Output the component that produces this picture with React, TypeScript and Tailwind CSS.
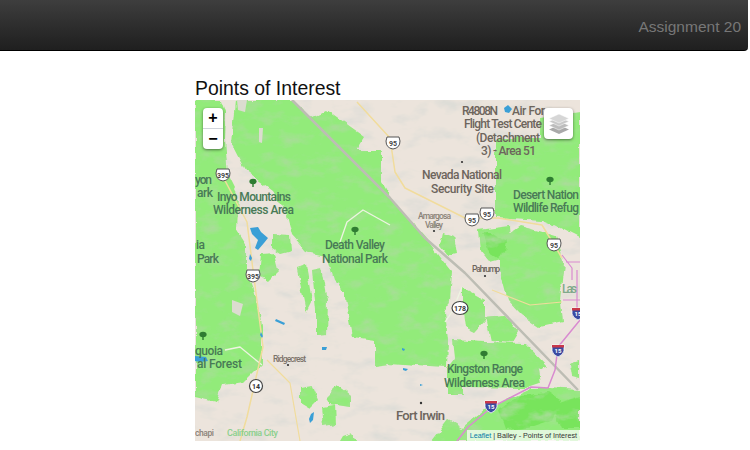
import React from "react";

const greens = [
  // left massif
  "195,100 222,100 226,112 225,140 228,175 238,195 236,228 247,245 247,272 254,290 259,310 262,327 262,363 243,382 223,385 217,402 195,397",
  // central block
  "232,145 236,100 294,100 310,118 327,110 365,137 357,150 382,150 382,182 392,200 420,232 432,246 444,262 452,272 450,300 445,313 448,340 447,367 430,366 390,363 375,365 375,340 353,337 345,292 333,280 326,256 307,252 292,235 287,215 272,190 245,170",
  "272,235 290,236 291,250 280,253 272,248",
  "260,254 276,253 280,270 268,282 258,276",
  "312,270 322,268 328,300 327,335 316,336 316,310",
  "297,268 306,265 312,300 306,312",
  "443,232 454,236 457,254 448,256 440,246",
  // north-east
  "495,138 540,138 540,118 580,112 580,238 552,224 542,220 495,217",
  "500,240 520,226 556,236 564,262 560,300 562,322 540,327 522,315 508,300 500,270",
  "478,230 510,226 512,256 490,262 480,250",
  "485,318 505,316 518,332 512,342 490,340",
  "570,363 580,360 580,378 572,376",
  "462,287 485,300 485,322 475,333 465,328 462,305",
  // Kingston
  "453,340 485,342 525,343 548,367 538,370 540,383 525,388 462,387 462,395 447,395 447,368 455,358",
  // south
  "432,441 448,420 462,428 485,409 531,388 548,388 580,390 580,441",
  "300,388 312,386 318,400 310,408 300,402",
  "244,322 250,312 262,322 252,335 244,340",
  "326,398 338,386 350,395 350,408 330,405",
  "322,408 335,406 336,424 324,426",
  "242,344 256,340 260,352 248,370 242,372",
  "343,436 352,433 358,441 340,441",
];

const brights = [
  "482,232 490,232 500,238 508,242 506,252 498,257 490,252",
  "498,410 520,395 548,392 560,400 552,420 528,428 505,430",
  "552,405 580,396 580,428 562,428",
];

const tan = [
  "237,100 247,100 245,112 238,110",
  "259,128 263,128 262,143 259,142",
  "232,300 243,304 240,316 232,312",
];

const lakes = [
  "M250 228 L258 227 L261 232 L268 238 L264 243 L258 250 L255 248 L258 240 L252 234 Z",
  "M250 254 L252 258 L251 261 L249 259 Z",
  "M504 108 L508 105 L512 109 L509 113 L505 112 Z",
  "M276 319 L285 323 L284 325 L275 321 Z",
  "M261 332 L263 336 L262 338 L260 335 Z",
  "M322 347 L327 347 L326 350 L322 350 Z",
  "M311 414 L314 412 L313 420 L310 423 L309 419 Z",
  "M195 356 L206 357 L208 361 L200 362 L195 361 Z",
  "M402 348 L405 349 L404 351 L402 350 Z",
  "M403 368 L408 369 L406 371 L403 370 Z",
  "M420 384 L423 385 L420 386 Z",
];

const labels: [string, number, number, number, string?, number?][] = [
  ["Inyo Mountains", 217, 201, 74],
  ["Wilderness Area", 213, 214, 81],
  ["yon", 195, 184, 17],
  ["ark", 197, 197, 16],
  ["ia", 196, 249, 9],
  ["Park", 197, 263, 22],
  ["Death Valley", 325, 249, 60],
  ["National Park", 322, 263, 66],
  ["R4808N", 462, 115, 36, "#6d655c"],
  ["Air For", 512, 115, 33, "#6d655c"],
  ["Flight Test Cente", 464, 128, 78, "#6d655c"],
  ["(Detachment", 476, 142, 64, "#6d655c"],
  ["3) - Area 51", 481, 155, 55, "#6d655c"],
  ["Nevada National", 422, 179, 80, "#6d655c"],
  ["Security Site", 431, 193, 63, "#6d655c"],
  ["Desert Nation", 513, 199, 66],
  ["Wildlife Refug", 513, 212, 66],
  ["Amargosa", 418, 219, 33, "#8a8278", 8.5],
  ["Valley", 425, 228, 18, "#8a8278", 8.5],
  ["Pahrump", 472, 272, 28, "#6d655c", 8.5],
  ["Las", 562, 293, 15, "#7fa98a"],
  ["Kingston Range", 447, 373, 76],
  ["Wilderness Area", 444, 387, 81],
  ["Fort Irwin", 396, 420, 49, "#6d655c", 13],
  ["quoia", 195, 355, 28],
  ["al Forest", 197, 368, 45],
  ["Ridgecrest", 273, 362, 33, "#7b736a", 8.5],
  ["chapi", 195, 436, 19, "#8a8278", 8.5],
  ["California City", 227, 436, 51, "#8ad08c", 9],
];

function Shield({ x, y, n }: { x: number; y: number; n: string }) {
  return (
    <g transform={`translate(${x} ${y})`}>
      <path d="M-6 -6 L6 -6 L7 -2 Q7 5 0 6 Q-7 5 -7 -2 Z" fill="#fff" stroke="#555" strokeWidth="1" />
      <text x="0" y="2.5" textAnchor="middle" fontSize="7" fontWeight="700" fill="#444">{n}</text>
    </g>
  );
}

function Oval({ x, y, n, wide }: { x: number; y: number; n: string; wide?: boolean }) {
  return (
    <g transform={`translate(${x} ${y})`}>
      <ellipse rx={wide ? 8 : 6.5} ry="6.5" fill="#fff" stroke="#444" strokeWidth="1.2" />
      <text x="0" y="2.5" textAnchor="middle" fontSize="7" fontWeight="700" fill="#333">{n}</text>
    </g>
  );
}

function Interstate({ x, y, n }: { x: number; y: number; n: string }) {
  return (
    <g transform={`translate(${x} ${y})`}>
      <path d="M-6 -5 L6 -5 L6 1 Q5 5 0 7 Q-5 5 -6 1 Z" fill="#3b4aa0" stroke="#fff" strokeWidth="0.8" />
      <path d="M-6 -5 L6 -5 L6 -2.5 L-6 -2.5 Z" fill="#c9384a" />
      <text x="0" y="3" textAnchor="middle" fontSize="6" fontWeight="700" fill="#fff">{n}</text>
    </g>
  );
}

function Tree({ x, y }: { x: number; y: number }) {
  return (
    <g transform={`translate(${x} ${y})`} fill="#2f7d32">
      <ellipse cx="0" cy="-1.5" rx="3.6" ry="2.8" />
      <rect x="-0.7" y="0" width="1.4" height="4" />
    </g>
  );
}

function TerrainMap() {
  return (
    <svg viewBox="195 100 385 341" className="block h-[341px] w-[385px] font-['Roboto',sans-serif]">
      <defs>
        <filter id="soft"><feGaussianBlur stdDeviation="0.4" /></filter>
        <filter id="desert" x="0" y="0" width="1" height="1">
          <feTurbulence type="fractalNoise" baseFrequency="0.035 0.07" numOctaves="4" seed="11" result="n" />
          <feColorMatrix in="n" type="matrix" values="0 0 0 0 0.72  0 0 0 0 0.72  0 0 0 0 0.68  2.6 0 0 0 -1.3" result="s" />
          <feMerge>
            <feMergeNode in="SourceGraphic" />
            <feMergeNode in="s" />
          </feMerge>
        </filter>
        <filter id="land" x="-0.05" y="-0.05" width="1.1" height="1.1">
          <feTurbulence type="fractalNoise" baseFrequency="0.07" numOctaves="3" seed="4" result="n" />
          <feDisplacementMap in="SourceGraphic" in2="n" scale="7" xChannelSelector="R" yChannelSelector="G" result="d" />
          <feGaussianBlur in="d" stdDeviation="0.5" result="b" />
          <feTurbulence type="fractalNoise" baseFrequency="0.05 0.09" numOctaves="4" seed="8" result="m" />
          <feColorMatrix in="m" type="matrix" values="0 0 0 0 0.4  0 0 0 0 0.72  0 0 0 0 0.32  2.2 0 0 0 -1.05" result="shade" />
          <feComposite in="shade" in2="b" operator="in" result="s" />
          <feMerge>
            <feMergeNode in="b" />
            <feMergeNode in="s" />
          </feMerge>
        </filter>
      </defs>
      <rect x="195" y="100" width="385" height="341" fill="#ece4dc" filter="url(#desert)" />
      <g filter="url(#land)">
        {greens.map((p) => <polygon key={p} points={p} fill="#92eb7a" />)}
        {brights.map((p) => <polygon key={p} points={p} fill="#78e45c" />)}
      </g>
      <g filter="url(#soft)">
        {tan.map((p) => <polygon key={p} points={p} fill="#dcdcd0" />)}
      </g>
      <g fill="none" strokeLinejoin="round" filter="url(#soft)">
        <path d="M292 100 L390 198 L425 238 L465 273 L578 390" stroke="#bdbdb4" strokeWidth="2.5" />
        <path d="M340 242 L347 222 L363 210 L390 225" stroke="#eef3e2" strokeWidth="1.3" />
        <path d="M462 287 L452 312 L445 322" stroke="#eef3e2" strokeWidth="1.3" />
        <path d="M225 350 L240 347 L262 365" stroke="#eef3e2" strokeWidth="1.3" />
        <path d="M357 102 L390 138 L395 172 L405 188 L465 218 L498 218 L542 225 L562 258" stroke="#f1dc9c" strokeWidth="1.5" />
        <path d="M222 175 L247 222 L253 270 L263 347 L247 417 L240 441" stroke="#f1dc9c" strokeWidth="1.5" />
        <path d="M267 360 L290 383 L300 441" stroke="#f1dc9c" strokeWidth="1.2" />
        <path d="M492 290 L530 305 L562 302" stroke="#f1dc9c" strokeWidth="1.2" />
        <path d="M580 320 L558 347 L555 370 L548 388 L531 387 L492 407 L468 427 L457 441" stroke="#d98bd0" strokeWidth="1.5" />
        <path d="M562 255 L572 268 L572 280 M580 262 L566 262 M563 300 L580 300 M577 270 L577 318" stroke="#d98bd0" strokeWidth="1.2" />
      </g>
      <g fill="#3a9fd6">
        {lakes.map((d) => <path key={d} d={d} />)}
      </g>
      <Tree x={253} y={183} />
      <Tree x={355} y={231} />
      <Tree x={550} y={181} />
      <Tree x={484} y={355} />
      <Tree x={203} y={336} />
      <g fill="#333">
        <circle cx="462" cy="162" r="1.1" />
        <circle cx="434" cy="231" r="1.1" />
        <circle cx="485" cy="276" r="1.1" />
        <circle cx="421" cy="403" r="1.2" />
        <circle cx="288" cy="365" r="1.1" />
      </g>
      <g fontWeight="500">
        {labels.map(([t, x, y, w, fill, size]) => (
          <text key={`${t}${y}`} x={x} y={y} textLength={w} fontSize={size ?? 12} fill={fill ?? "#487a56"}>{t}</text>
        ))}
      </g>
      <Shield x={223} y={175} n="395" />
      <Shield x={253} y={276} n="395" />
      <Shield x={393} y={143} n="95" />
      <Shield x={472} y={220} n="95" />
      <Shield x={487} y={214} n="95" />
      <Shield x={554} y={245} n="95" />
      <Oval x={256} y={386} n="14" />
      <Oval x={460} y={308} n="178" wide />
      <Interstate x={558} y={350} n="15" />
      <Interstate x={491} y={406} n="15" />
      <Interstate x={578} y={313} n="15" />
    </svg>
  );
}

function MapControls() {
  return (
    <div className="absolute left-2 top-2 flex w-5 flex-col rounded-sm bg-white font-['Liberation_Sans',sans-serif] text-black shadow-[0_1px_3px_rgba(0,0,0,0.5)]">
      <div className="flex h-[21px] items-center justify-center border-b border-gray-300 text-base font-bold leading-none">+</div>
      <div className="flex h-5 items-center justify-center text-base font-bold leading-none">−</div>
    </div>
  );
}

function LayersButton() {
  return (
    <div className="absolute right-[7px] top-2 flex h-[31px] w-[29px] items-center justify-center rounded bg-white shadow-[0_1px_3px_rgba(0,0,0,0.5)]">
      <svg viewBox="0 0 22 22" className="h-[22px] w-[22px]">
        <path d="M11 12 L21 16.5 L11 21 L1 16.5 Z" fill="#a9a9a9" />
        <path d="M11 8 L21 12.5 L11 17 L1 12.5 Z" fill="#bdbdbd" stroke="#fff" strokeWidth="0.5" />
        <path d="M11 4 L21 8.5 L11 13 L1 8.5 Z" fill="#c9c9c9" stroke="#fff" strokeWidth="0.5" />
        <path d="M11 1 L21 5.5 L11 10 L1 5.5 Z" fill="#d6d6d6" stroke="#fff" strokeWidth="0.5" />
      </svg>
    </div>
  );
}

export default function App() {
  return (
    <div className="h-[450px] w-[750px] overflow-hidden bg-white font-['Liberation_Sans',Arial,sans-serif]">
      <header className="flex h-[51px] w-[748px] items-center justify-end rounded-br border-b border-black bg-gradient-to-b from-[#3e3e3e] to-[#1f1f1f] pr-[7px] pt-1">
        <span className="text-[15.5px] text-[#777]">Assignment 20</span>
      </header>
      <main className="pl-[195px] pt-[26px]">
        <h1 className="text-[19.4px] leading-[23px] text-[#111]">Points of Interest</h1>
        <div className="relative h-[341px] w-[385px] overflow-hidden">
          <TerrainMap />
          <MapControls />
          <LayersButton />
          <div className="absolute bottom-0 right-0 bg-white/70 px-[3px] text-[7.2px] leading-[11px] text-[#333]">
            <span className="text-[#0078a8]">Leaflet</span> | Bailey - Points of Interest
          </div>
        </div>
      </main>
    </div>
  );
}
